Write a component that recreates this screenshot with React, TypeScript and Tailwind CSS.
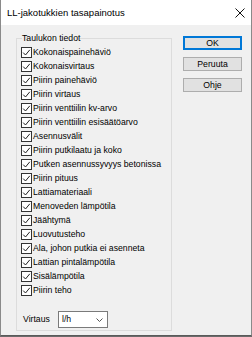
import React from "react";

const items = [
  "Kokonaispainehäviö",
  "Kokonaisvirtaus",
  "Piirin painehäviö",
  "Piirin virtaus",
  "Piirin venttiilin kv-arvo",
  "Piirin venttiilin esisäätöarvo",
  "Asennusvälit",
  "Piirin putkilaatu ja koko",
  "Putken asennussyvyys betonissa",
  "Piirin pituus",
  "Lattiamateriaali",
  "Menoveden lämpötila",
  "Jäähtymä",
  "Luovutusteho",
  "Ala, johon putkia ei asenneta",
  "Lattian pintalämpötila",
  "Sisälämpötila",
  "Piirin teho",
];

function Check({ label }: { label: string }) {
  return (
    <div className="flex items-center h-[14px]">
      <span className="w-[11px] h-[11px] border border-[#333] bg-white flex items-center justify-center">
        <svg width="9" height="9" viewBox="0 0 9 9">
          <polyline points="1.2,4.6 3.5,7 7.8,1.8" fill="none" stroke="#222" strokeWidth="1" />
        </svg>
      </span>
      <span className="ml-[1px] whitespace-nowrap">{label}</span>
    </div>
  );
}

function Btn({ children, def }: { children: React.ReactNode; def?: boolean }) {
  return (
    <div
      className={
        def
          ? "h-[14px] flex items-center justify-center bg-[#e1e1e1] border border-[#0078d7] outline outline-1 outline-[#0078d7] -outline-offset-2"
          : "h-[14px] flex items-center justify-center bg-[#e1e1e1] border border-[#adadad]"
      }
    >
      {children}
    </div>
  );
}

export default function App() {
  return (
    <div className="w-[252px] h-[337px] bg-[#6b6b6b] font-['Liberation_Sans',Arial,sans-serif] text-[8.7px] text-black leading-none">
      <div className="w-[252px] h-[336px] flex flex-col border-l border-r border-b border-[#8a8a8a] border-b-[#5a5a5a] bg-[#f0f0f0]">
        {/* title bar */}
        <div className="h-[25px] bg-white flex items-center justify-between pl-[6px] pr-[6px]">
          <span className="text-[9.5px]">LL-jakotukkien tasapainotus</span>
          <svg width="10" height="10" viewBox="0 0 10 10">
            <path d="M0.5 0.5 L9.5 9.5 M9.5 0.5 L0.5 9.5" stroke="#111" strokeWidth="1" />
          </svg>
        </div>

        {/* body */}
        <div className="flex flex-1 pl-[15px]">
          <fieldset className="w-[156px] h-[299px] mt-[7px] border border-[#dcdcdc] pl-[4px] pt-[1px]">
            <legend className="ml-[1px] leading-[12px]">Taulukon tiedot</legend>
            {items.map((t) => (
              <Check key={t} label={t} />
            ))}
            <div className="flex items-center mt-[14px] ml-[2px]">
              <span className="w-[35px]">Virtaus</span>
              <div className="w-[50px] h-[17px] bg-white border border-[#7a7a7a] flex items-center justify-between pl-[3px] pr-[4px]">
                <span>l/h</span>
                <svg width="7" height="4" viewBox="0 0 7 4">
                  <polyline points="0.5,0.5 3.5,3.5 6.5,0.5" fill="none" stroke="#555" strokeWidth="1" />
                </svg>
              </div>
            </div>
          </fieldset>

          <div className="w-[59px] ml-[11px] mt-[11px] flex flex-col gap-[7px]">
            <Btn def>OK</Btn>
            <Btn>Peruuta</Btn>
            <Btn>Ohje</Btn>
          </div>
        </div>
      </div>
    </div>
  );
}
